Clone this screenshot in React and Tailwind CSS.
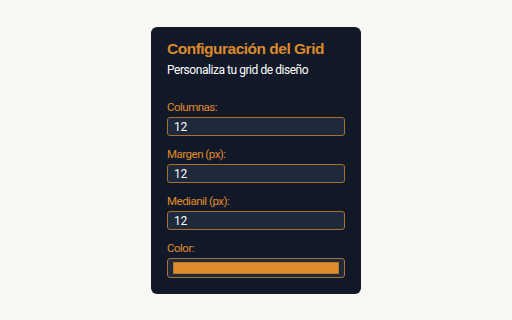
export default function App() {
    const campos = [
        { label: "Columnas:", valor: "12" },
        { label: "Margen (px):", valor: "12" },
        { label: "Medianil (px):", valor: "12" },
    ];

    return (
        <div className="w-[512px] h-[320px] bg-[#f8f7f4] flex justify-center pt-[27px] font-['Roboto',sans-serif]">
            <div className="w-[210px] h-[267px] bg-[#111827] rounded-md px-4 pt-3">
                <h1 className="text-[15.5px] leading-5 font-bold tracking-[-0.5px] text-[#dd8a2b] font-['Liberation_Sans',sans-serif]">
                    Configuración del Grid
                </h1>
                <p className="text-[12px] leading-4 tracking-[-0.45px] text-white mt-[3px]">
                    Personaliza tu grid de diseño
                </p>

                <div className="mt-[21px] flex flex-col gap-[10px]">
                    {campos.map((c) => (
                        <div key={c.label}>
                            <label className="block text-[11.5px] leading-4 tracking-[-0.5px] text-[#e08c2c] mb-[2px]">
                                {c.label}
                            </label>
                            <div className="h-[19px] bg-[#1e293b] border border-[#a8702e] rounded-[3px] px-[6px] flex items-center text-[12px] tracking-[-0.3px] text-white">
                                {c.valor}
                            </div>
                        </div>
                    ))}
                    <div>
                        <label className="block text-[11.5px] leading-4 tracking-[-0.5px] text-[#e08c2c] mb-[2px]">
                            Color:
                        </label>
                        <div className="h-[20px] bg-[#1e293b] border border-[#a8702e] rounded-[3px] px-[5px] py-[3px]">
                            <div className="h-full bg-[#dc8c2a] border border-[#b5742a]" />
                        </div>
                    </div>
                </div>
            </div>
        </div>
    );
}
